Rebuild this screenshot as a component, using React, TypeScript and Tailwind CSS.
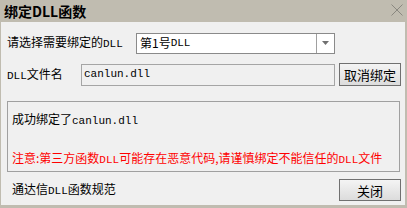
import React from "react";

const cjk = "font-['Noto_Sans_CJK_SC',sans-serif]";

function Ascii({ children }: { children: React.ReactNode }) {
  return <span className="font-['Liberation_Mono','Noto_Sans_CJK_SC',monospace] text-[11px]">{children}</span>;
}

function WinButton({ label }: { label: string }) {
  return (
    <button className="h-full w-[62px] border border-[#707070] bg-gradient-to-b from-[#f4f4f4] to-[#dcdcdc] text-[13px] leading-none text-black">
      {label}
    </button>
  );
}

export default function App() {
  return (
    <div className={`flex h-[208px] w-[407px] flex-col bg-[#c0bcb0] pb-[3px] pl-[1px] pr-[2px] ${cjk} text-[12px] text-black`}>
      <div className="flex h-[22px] shrink-0 items-center justify-between pl-[3px] pr-[2px]">
        <span className="text-[14px] font-bold leading-none">绑定DLL函数</span>
        <svg width="12" height="12" viewBox="0 0 12 12" className="mt-[-2px]">
          <path d="M0.5 0.5 L11.5 11.5 M11.5 0.5 L0.5 11.5" stroke="#8a8880" strokeWidth="1" fill="none" />
        </svg>
      </div>

      <div className="flex flex-1 flex-col bg-[#f0f0f0] pt-[11px]">
        <div className="ml-[6px] flex h-[20px] items-center">
          <span className="w-[129px] leading-none">
            请选择需要绑定的<Ascii>DLL</Ascii>
          </span>
          <div className="flex h-[21px] w-[199px] items-stretch border border-[#8a8a8a] bg-white">
            <span className="flex flex-1 items-center pl-[3px] leading-none">
              第1号<Ascii>DLL</Ascii>
            </span>
            <span className="flex w-[18px] items-center justify-center border-l border-[#a0a0a0]">
              <svg width="7" height="4" viewBox="0 0 7 4">
                <path d="M0 0 H7 L3.5 4 Z" fill="#707070" />
              </svg>
            </span>
          </div>
        </div>

        <div className="ml-[6px] mt-[10px] flex h-[23px] items-center">
          <span className="w-[74px] leading-none">
            <Ascii>DLL</Ascii>文件名
          </span>
          <div className="flex h-[22px] w-[254px] items-center border border-[#a5a5a5] bg-[#f0f0f0] pl-[2px]">
            <Ascii>canlun.dll</Ascii>
          </div>
          <div className="ml-[4px] h-[23px]">
            <WinButton label="取消绑定" />
          </div>
        </div>

        <div className="ml-[6px] mt-[15px] flex h-[71px] w-[393px] flex-col border border-[#a0a0a0] pl-[4px]">
          <div className="mt-[10px] leading-[14px]">
            成功绑定了<Ascii>canlun.dll</Ascii>
          </div>
          <div className="mt-[23px] leading-[14px] text-[#ff0000]">
            注意:第三方函数<Ascii>DLL</Ascii>可能存在恶意代码,请谨慎绑定不能信任的<Ascii>DLL</Ascii>文件
          </div>
        </div>

        <div className="mt-[7px] flex h-[22px] items-center justify-between pl-[11px] pr-[4px]">
          <span className="leading-none">
            通达信<Ascii>DLL</Ascii>函数规范
          </span>
          <div className="h-[22px]">
            <WinButton label="关闭" />
          </div>
        </div>
      </div>
    </div>
  );
}
